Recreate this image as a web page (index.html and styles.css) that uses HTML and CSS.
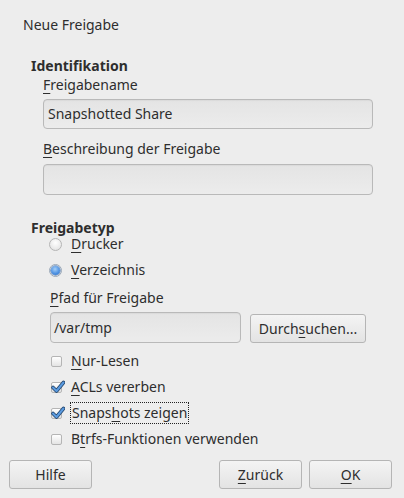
FILE: index.html
```html
<!DOCTYPE html>
<html lang="de">
<head>
<meta charset="utf-8">
<title>Neue Freigabe</title>
<link rel="stylesheet" href="styles.css">
</head>
<body>
<div class="dialog">
  <div class="title">Neue Freigabe</div>

  <section class="group ident">
    <div class="group-title">Identifikation</div>
    <div class="field">
      <div class="label"><u>F</u>reigabename</div>
      <div class="input">Snapshotted Share</div>
    </div>
    <div class="field second">
      <div class="label"><u>B</u>eschreibung der Freigabe</div>
      <div class="input"></div>
    </div>
  </section>

  <section class="group type">
    <div class="group-title">Freigabetyp</div>
    <div class="radios">
      <div class="opt"><span class="radio"></span><span class="opt-label"><u>D</u>rucker</span></div>
      <div class="opt"><span class="radio on"></span><span class="opt-label"><u>V</u>erzeichnis</span></div>
    </div>
    <div class="path">
      <div class="label"><u>P</u>fad für Freigabe</div>
      <div class="path-row">
        <div class="input path-input">/var/tmp</div>
        <div class="btn browse">Durch<u>s</u>uchen...</div>
      </div>
    </div>
    <div class="checks">
      <div class="opt"><span class="check"></span><span class="opt-label"><u>N</u>ur-Lesen</span></div>
      <div class="opt"><span class="check on"><svg viewBox="0 0 14 14" width="14" height="14"><path d="M2 7.5 L5.5 11 L12.5 2.5" fill="none" stroke="#23466e" stroke-width="3.6" stroke-linecap="round" stroke-linejoin="round"/><path d="M2 7.5 L5.5 11 L12.5 2.5" fill="none" stroke="#5b9be0" stroke-width="2" stroke-linecap="round" stroke-linejoin="round"/></svg></span><span class="opt-label"><u>A</u>CLs vererben</span></div>
      <div class="opt"><span class="check on"><svg viewBox="0 0 14 14" width="14" height="14"><path d="M2 7.5 L5.5 11 L12.5 2.5" fill="none" stroke="#23466e" stroke-width="3.6" stroke-linecap="round" stroke-linejoin="round"/><path d="M2 7.5 L5.5 11 L12.5 2.5" fill="none" stroke="#5b9be0" stroke-width="2" stroke-linecap="round" stroke-linejoin="round"/></svg></span><span class="opt-label focus">Snaps<u>h</u>ots zeigen</span></div>
      <div class="opt"><span class="check"></span><span class="opt-label">B<u>t</u>rfs-Funktionen verwenden</span></div>
    </div>
  </section>

  <div class="buttons">
    <div class="btn">Hilfe</div>
    <div class="spacer"></div>
    <div class="btn"><u>Z</u>urück</div>
    <div class="btn"><u>O</u>K</div>
  </div>
</div>
</body>
</html>
```
FILE: styles.css
```css
html, body {
  margin: 0;
  padding: 0;
  background: #ededed;
}
body {
  width: 404px;
  height: 498px;
  overflow: hidden;
  font-family: "Noto Sans", "Open Sans", "DejaVu Sans", sans-serif;
  font-size: 14px;
  line-height: 16px;
  color: #2e2e2e;
}
u {
  text-decoration: underline;
  text-underline-offset: 3px;
  text-decoration-thickness: 1px;
}
.dialog {
  display: flex;
  flex-direction: column;
  padding: 17px 0 0 0;
  height: 498px;
  box-sizing: border-box;
}
.title {
  padding-left: 23px;
}
.group {
  padding-left: 31px;
  display: flex;
  flex-direction: column;
}
.ident {
  margin-top: 26px;
}
.group-title {
  font-weight: bold;
  height: 14px;
  line-height: 14px;
}
.field {
  padding-left: 12px;
  margin-top: 4px;
  display: flex;
  flex-direction: column;
}
.field.second {
  margin-top: 12px;
}
.label {
  height: 16px;
}
.input {
  box-sizing: border-box;
  border: 1px solid #b9b9b9;
  border-radius: 4px;
  background: linear-gradient(#e4e4e4, #ececec);
  box-shadow: inset 0 1px 1px rgba(0,0,0,0.04);
  height: 30px;
  width: 330px;
  margin-top: 6px;
  padding: 0 4px;
  line-height: 28px;
}
.field.second .input {
  height: 31px;
  margin-top: 7px;
}
.type {
  margin-top: 26px;
}
.radios {
  padding-left: 18px;
  display: flex;
  flex-direction: column;
  gap: 10px;
  margin-top: 1px;
}
.opt {
  display: flex;
  align-items: center;
  height: 16px;
}
.opt-label {
  margin-left: 9px;
  line-height: 16px;
}
.radio {
  width: 13px;
  height: 13px;
  flex: none;
  box-sizing: border-box;
  border-radius: 50%;
  border: 1px solid #b5b5b5;
  background: radial-gradient(circle at 50% 35%, #ffffff, #e6e6e6 75%);
  position: relative;
}
.radio.on {
  border-color: #9aa8b8;
}
.radio.on::after {
  content: "";
  position: absolute;
  left: 1px;
  top: 1px;
  width: 9px;
  height: 9px;
  border-radius: 50%;
  background: radial-gradient(circle at 45% 35%, #a4cff8, #4a8ee0 60%, #2f6fc4);
  box-shadow: 0 0 0 0.5px #2e63a8;
}
.path {
  padding-left: 19px;
  margin-top: 12px;
  display: flex;
  flex-direction: column;
}
.path-row {
  display: flex;
  align-items: flex-end;
  gap: 9px;
  margin-top: 6px;
}
.path-input {
  width: 191px;
  height: 31px;
  margin-top: 0;
  padding-left: 3px;
  line-height: 29px;
}
.btn {
  box-sizing: border-box;
  height: 29px;
  border: 1px solid #b5b5b5;
  border-radius: 3px;
  background: linear-gradient(#f4f4f4, #e3e3e3);
  display: flex;
  align-items: center;
  justify-content: center;
  padding: 0 6px;
}
.browse {
  width: 116px;
}
.checks {
  padding-left: 20px;
  margin-top: 10px;
  display: flex;
  flex-direction: column;
  gap: 10px;
}
.checks .opt-label {
  margin-left: 9px;
}
.check {
  width: 11px;
  height: 11px;
  flex: none;
  box-sizing: border-box;
  border: 1px solid #b5b5b5;
  border-radius: 2px;
  background: linear-gradient(#ffffff, #e4e4e4);
  position: relative;
}
.check svg {
  position: absolute;
  left: -1px;
  top: -3px;
}
.focus {
  outline: 1px dotted #222;
  outline-offset: 0;
  margin-left: 7px;
  padding: 2px 1px;
}
.buttons {
  margin-top: auto;
  margin-bottom: 9px;
  display: flex;
  gap: 7px;
  padding: 0 12px 0 9px;
}
.buttons .btn {
  width: 83px;
}
.spacer {
  flex: 1;
}
```
